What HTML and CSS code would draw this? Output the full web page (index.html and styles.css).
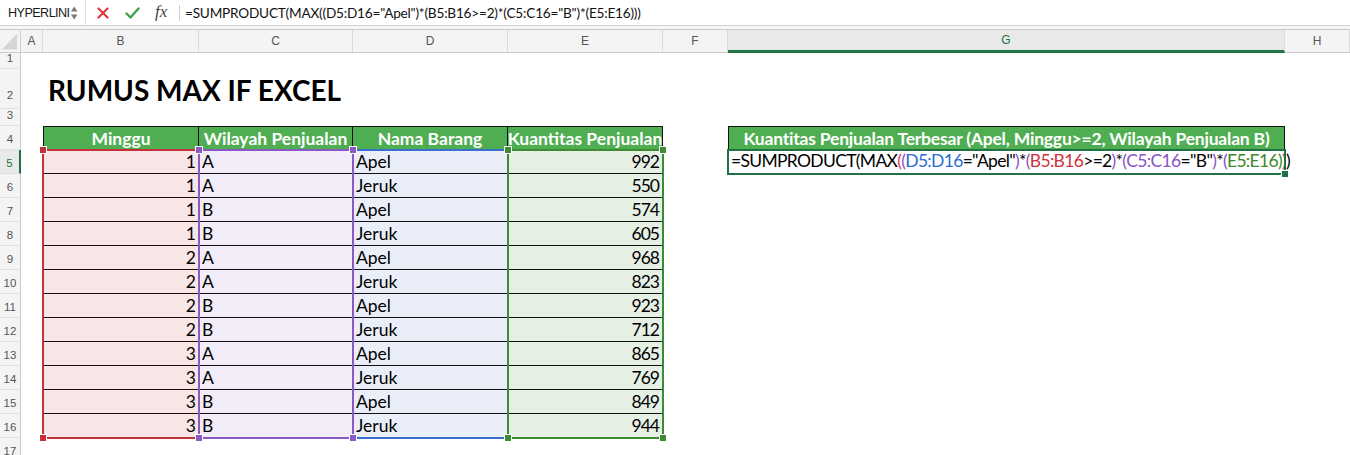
FILE: index.html
```html
<!DOCTYPE html>
<html>
<head>
<meta charset="utf-8">
<title>Rumus MAX IF Excel</title>
<link rel="stylesheet" href="styles.css">
</head>
<body>
<div class="toolbar">
  <div class="namebox">
    <span class="name">HYPERLINI</span>
    <svg class="spin" width="9" height="18" viewBox="0 0 9 18"><path d="M4.5 2 L8 7.5 H1 Z M4.5 16 L8 10.5 H1 Z" fill="#7b7b7b"/></svg>
  </div>
  <div class="fbtns">
    <svg class="cancel" width="12" height="12" viewBox="0 0 12 12"><path d="M1.5 1.5 L10.5 10.5 M10.5 1.5 L1.5 10.5" stroke="#e0393e" stroke-width="2.2" stroke-linecap="round"/></svg>
    <svg class="enter" width="15" height="12" viewBox="0 0 15 12"><path d="M1.5 6.5 L5.5 10.5 L13.5 1.5" stroke="#3ea24d" stroke-width="2.4" fill="none" stroke-linecap="round" stroke-linejoin="round"/></svg>
    <span class="fx">fx</span>
    <span class="sep"></span>
  </div>
  <div class="ftext">=SUMPRODUCT(MAX((D5:D16="Apel")*(B5:B16&gt;=2)*(C5:C16="B")*(E5:E16)))</div>
</div>
<div class="strip"></div>

<div class="stack">
  <div class="sheet">
    <!-- column headers -->
    <div class="ch corner"><svg width="21" height="23" viewBox="0 0 21 23"><polygon points="18,3 18,20 2,20" fill="#d6d6d6"/></svg></div>
    <div class="ch">A</div>
    <div class="ch">B</div>
    <div class="ch">C</div>
    <div class="ch">D</div>
    <div class="ch">E</div>
    <div class="ch">F</div>
    <div class="ch on">G</div>
    <div class="ch">H</div>

    <!-- row 1 -->
    <div class="rh">1</div><div class="rest"></div>
    <!-- row 2 -->
    <div class="rh r2">2</div><div class="c"></div>
    <div class="title">RUMUS MAX IF EXCEL</div>
    <div class="c"></div><div class="c"></div><div class="c"></div>
    <!-- row 3 -->
    <div class="rh">3</div><div class="rest"></div>
    <!-- row 4 -->
    <div class="rh">4</div><div class="c"></div>
    <div class="hd first">Minggu</div>
    <div class="hd">Wilayah Penjualan</div>
    <div class="hd">Nama Barang</div>
    <div class="hd">Kuantitas Penjualan</div>
    <div class="c"></div>
    <div class="hd first wide">Kuantitas Penjualan Terbesar (Apel, Minggu&gt;=2, Wilayah Penjualan B)</div>
    <div class="c"></div>

    <!-- row 5 -->
    <div class="rh on">5</div><div class="c"></div>
    <div class="c cb num">1</div><div class="c cc">A</div><div class="c cd">Apel</div><div class="c ce num">992</div>
    <div class="c"></div>
    <div class="c g5"><span class="k">=SUMPRODUCT(MAX</span><span class="p2">(</span><span class="p3">(</span><span class="rb">D5:D16</span>="Apel"<span class="p3">)</span>*<span class="p3">(</span><span class="rr">B5:B16</span>&gt;=2<span class="p3">)</span>*<span class="p3">(</span><span class="rp">C5:C16</span>="B"<span class="p3">)</span>*<span class="p3">(</span><span class="rg">E5:E16</span><span class="rg">)</span><span class="p2">)</span>)<span class="caret"></span></div>
    <div class="c"></div>

    <div class="rh">6</div><div class="c"></div>
    <div class="c cb num">1</div><div class="c cc">A</div><div class="c cd">Jeruk</div><div class="c ce num">550</div>
    <div class="rest3"></div>

    <div class="rh">7</div><div class="c"></div>
    <div class="c cb num">1</div><div class="c cc">B</div><div class="c cd">Apel</div><div class="c ce num">574</div>
    <div class="rest3"></div>

    <div class="rh">8</div><div class="c"></div>
    <div class="c cb num">1</div><div class="c cc">B</div><div class="c cd">Jeruk</div><div class="c ce num">605</div>
    <div class="rest3"></div>

    <div class="rh">9</div><div class="c"></div>
    <div class="c cb num">2</div><div class="c cc">A</div><div class="c cd">Apel</div><div class="c ce num">968</div>
    <div class="rest3"></div>

    <div class="rh">10</div><div class="c"></div>
    <div class="c cb num">2</div><div class="c cc">A</div><div class="c cd">Jeruk</div><div class="c ce num">823</div>
    <div class="rest3"></div>

    <div class="rh">11</div><div class="c"></div>
    <div class="c cb num">2</div><div class="c cc">B</div><div class="c cd">Apel</div><div class="c ce num">923</div>
    <div class="rest3"></div>

    <div class="rh">12</div><div class="c"></div>
    <div class="c cb num">2</div><div class="c cc">B</div><div class="c cd">Jeruk</div><div class="c ce num">712</div>
    <div class="rest3"></div>

    <div class="rh">13</div><div class="c"></div>
    <div class="c cb num">3</div><div class="c cc">A</div><div class="c cd">Apel</div><div class="c ce num">865</div>
    <div class="rest3"></div>

    <div class="rh">14</div><div class="c"></div>
    <div class="c cb num">3</div><div class="c cc">A</div><div class="c cd">Jeruk</div><div class="c ce num">769</div>
    <div class="rest3"></div>

    <div class="rh">15</div><div class="c"></div>
    <div class="c cb num">3</div><div class="c cc">B</div><div class="c cd">Apel</div><div class="c ce num">849</div>
    <div class="rest3"></div>

    <div class="rh">16</div><div class="c"></div>
    <div class="c cb num">3</div><div class="c cc">B</div><div class="c cd">Jeruk</div><div class="c ce num">944</div>
    <div class="rest3"></div>

    <div class="rh">17</div><div class="rest"></div>
  </div>

  <div class="sheet overlay">
    <div class="rng rng-d"><i class="h tl"></i><i class="h tr"></i><i class="h bl"></i><i class="h br"></i></div>
    <div class="rng rng-b"><i class="h tl"></i><i class="h tr"></i><i class="h bl"></i><i class="h br"></i></div>
    <div class="rng rng-c"><i class="h tl"></i><i class="h tr"></i><i class="h bl"></i><i class="h br"></i></div>
    <div class="rng rng-e"><i class="h tl"></i><i class="h tr"></i><i class="h bl"></i><i class="h br"></i></div>
    <div class="sel"><i class="fill"></i></div>
  </div>
</div>
</body>
</html>
```

FILE: styles.css
```css
* { box-sizing: border-box; }
html, body { margin: 0; padding: 0; background: #fff; }
body {
  width: 1350px;
  height: 455px;
  overflow: hidden;
  font-family: Lato, "Liberation Sans", sans-serif;
  color: #000;
}

/* ---------- formula bar ---------- */
.toolbar {
  display: flex;
  align-items: center;
  height: 26px;
  border-bottom: 1px solid #d3d3d3;
  background: #fff;
}
.namebox {
  width: 86px;
  height: 100%;
  display: flex;
  align-items: center;
  padding: 0 7px 0 8px;
  border-right: 1px solid #e2e2e2;
}
.name {
  font-family: "Liberation Sans", sans-serif;
  font-size: 12.6px;
  letter-spacing: -0.55px;
  color: #1a1a1a;
}
.spin { margin-left: auto; }
.fbtns {
  width: 94px;
  height: 100%;
  display: flex;
  align-items: center;
  padding-left: 11px;
}
.enter { margin-left: 16px; }
.fx {
  margin-left: 15px;
  font-family: "Liberation Serif", serif;
  font-style: italic;
  font-size: 17px;
  color: #444;
  line-height: 1;
  margin-top: -2px;
}
.sep {
  margin-left: auto;
  width: 1px;
  height: 16px;
  background: #cfcfcf;
}
.ftext {
  padding-left: 5px;
  font-family: Lato, "Liberation Sans", sans-serif;
  font-size: 13.6px;
  letter-spacing: -0.2px;
  color: #111;
  white-space: nowrap;
}
.strip {
  height: 4px;
  background: #f6f6f6;
  border-bottom: 1px solid #cbcbcb;
}

/* ---------- sheet grid ---------- */
.stack { display: grid; }
.stack > * { grid-area: 1 / 1; }

.sheet {
  display: grid;
  grid-template-columns: 21px 22px 156px 154px 155px 155px 65px 557px 65px;
  grid-template-rows: 23px 16px 40px 17px 24px repeat(12, 24px) 24px;
}
.overlay { pointer-events: none; }

.ch {
  background: #f4f4f4;
  border-right: 1px solid #dadada;
  border-bottom: 1px solid #c9c9c9;
  display: flex;
  align-items: center;
  justify-content: center;
  font-family: "Liberation Sans", sans-serif;
  font-size: 12px;
  color: #555;
}
.ch.corner { padding: 0; border-right-color: #cfcfcf; }
.ch.on {
  background: #e9e9e9;
  color: #217346;
  border-bottom: 3px solid #217346;
}

.rh {
  background: #f4f4f4;
  border-right: 1px solid #c9c9c9;
  border-bottom: 1px solid #e0e0e0;
  display: flex;
  align-items: flex-end;
  justify-content: center;
  padding-bottom: 3px;
  font-family: "Liberation Sans", sans-serif;
  font-size: 11.5px;
  line-height: 13px;
  color: #555;
}
.rh.r2 { padding-bottom: 6px; }
.rh.on {
  background: #e9e9e9;
  color: #217346;
  border-right: 2px solid #217346;
}

.rest { grid-column: span 8; }
.rest3 { grid-column: span 3; }

.title {
  grid-column: span 4;
  display: flex;
  align-items: flex-end;
  padding: 0 0 2px 5px;
  font-weight: 700;
  font-size: 28px;
  line-height: 34px;
  white-space: nowrap;
}

.c {
  display: flex;
  align-items: flex-start;
  padding: 3px 3px 0;
  font-size: 17.5px;
  line-height: 18px;
  white-space: nowrap;
}
.num { justify-content: flex-end; padding-right: 4px; letter-spacing: -1px; }
.cb, .cc, .cd, .ce { border-bottom: 1px solid #111; }
.cb { background: #f8e6e6; }
.cc { background: #f1ecf8; }
.cd { background: #e9eef9; }
.ce { background: #e6f0e4; }

.hd {
  background: #4fae52;
  color: #fff;
  font-weight: 700;
  font-size: 17.5px;
  line-height: 18px;
  display: flex;
  justify-content: center;
  align-items: flex-start;
  padding-top: 3px;
  border-top: 1px solid #111;
  border-right: 1px solid #111;
  white-space: nowrap;
}
.hd.first { border-left: 1px solid #111; }
.hd.wide { letter-spacing: -0.2px; }

.g5 { overflow: visible; padding-left: 3px; padding-top: 2px; letter-spacing: -0.68px; }
.g5 .rb { color: #2f6bd3; }
.g5 .rr { color: #cf313d; }
.g5 .rp { color: #8853c6; }
.g5 .rg { color: #3a8a2b; }
.g5 .p2 { color: #d63c5c; }
.g5 .p3 { color: #8853c6; }
.caret {
  display: inline-block;
  width: 1px;
  height: 19px;
  margin-left: 3px;
  margin-top: -1px;
  background: #000;
}

/* ---------- reference range outlines ---------- */
.rng {
  position: relative;
  grid-row: 6 / 18;
  margin: -1px;
  border: 2px solid currentColor;
}
.rng-d { grid-column: 5; color: #3a6fcf; }
.rng-b { grid-column: 3; color: #c3323b; }
.rng-c { grid-column: 4; color: #8a5ac2; }
.rng-e { grid-column: 6; color: #3d8b32; }

.h {
  position: absolute;
  width: 8px;
  height: 8px;
  background: currentColor;
  border: 1px solid #fff;
}
.tl { left: -5px; top: -5px; }
.tr { right: -5px; top: -5px; }
.bl { left: -5px; bottom: -5px; }
.br { right: -5px; bottom: -5px; }

.sel {
  position: relative;
  grid-column: 8;
  grid-row: 6;
  margin: -1px;
  border: 2px solid #1f7244;
}
.fill {
  position: absolute;
  right: -5px;
  bottom: -5px;
  width: 8px;
  height: 8px;
  background: #1f7244;
  border: 1px solid #fff;
}
```
